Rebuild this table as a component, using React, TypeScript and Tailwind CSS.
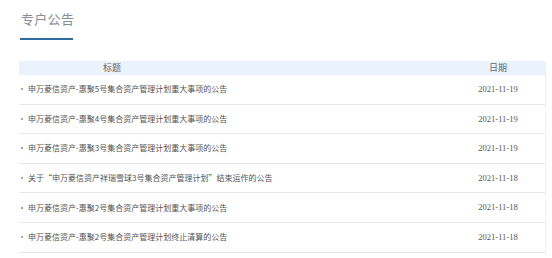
import React from "react";

const rows = [
  { t: "申万菱信资产-惠聚5号集合资产管理计划重大事项的公告", d: "2021-11-19" },
  { t: "申万菱信资产-惠聚4号集合资产管理计划重大事项的公告", d: "2021-11-19" },
  { t: "申万菱信资产-惠聚3号集合资产管理计划重大事项的公告", d: "2021-11-19" },
  { t: "关于“申万菱信资产祥瑞雪球3号集合资产管理计划”结束运作的公告", d: "2021-11-18" },
  { t: "申万菱信资产-惠聚2号集合资产管理计划重大事项的公告", d: "2021-11-18" },
  { t: "申万菱信资产-惠聚2号集合资产管理计划终止清算的公告", d: "2021-11-18" },
];

const cjk = { fontFamily: '"Noto Sans CJK SC", "Noto Sans", sans-serif' };
const serif = { fontFamily: '"Liberation Serif", "Noto Sans CJK SC", serif' };

export default function App() {
  return (
    <div className="w-[552px] h-[258px] bg-white overflow-hidden relative">
      <div className="pl-[21px] pt-[11px]">
        <div className="text-[13px] leading-[16px] text-[#8a8e96] tracking-[0.3px]" style={cjk}>
          专户公告
        </div>
      </div>
      <div className="ml-[20px] mt-[11px] w-[53px] h-[2px] bg-[#2f6c9e]" />
      <div className="ml-[19px] mt-[21px] w-[527px] border-r border-[#eef0f2]">
        <div className="h-[14px] bg-[#eaf3fc] flex items-center text-[9px] text-[#666]" style={cjk}>
          <div className="w-[186px] text-center">标题</div>
          <div className="flex-1" />
          <div className="w-[94px] text-center">日期</div>
        </div>
        {rows.map((r, i) => (
          <div
            key={i}
            className="h-[29.6px] border-b-[1.5px] border-[#e8e8e8] flex items-center"
          >
            <span className="ml-[2px] w-[2px] h-[2px] rounded-full bg-[#888]" />
            <span className="ml-[5px] text-[8px] leading-[10px] text-[#555]" style={cjk}>
              {r.t}
            </span>
            <div className="flex-1" />
            <span className="w-[94px] text-center text-[8.5px] text-[#555]" style={serif}>
              {r.d}
            </span>
          </div>
        ))}
      </div>
    </div>
  );
}
